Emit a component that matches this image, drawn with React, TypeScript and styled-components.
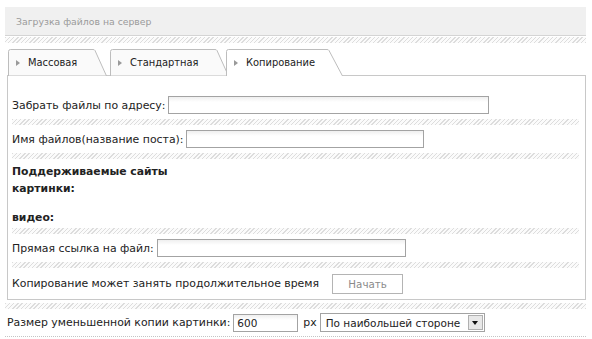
import { FC } from 'react';
import styled, { createGlobalStyle } from 'styled-components';

const GlobalStyle = createGlobalStyle`
  body {
    margin: 0;
    background: #fff;
    font-family: 'DejaVu Sans', Verdana, sans-serif;
    font-size: 10.9px;
    color: #222;
  }
`;

const hatch = 'repeating-linear-gradient(135deg, #dddddd 0 1px, #fbfbfb 1px 3px)';

const SPage = styled.div`
  padding: 7px 6px 0 5px;
  width: 581px;
`;

const SHeader = styled.div`
  height: 28px;
  display: flex;
  align-items: center;
  padding-left: 11px;
  background: #f0f0f0;
  border-bottom: 1px solid #d4d4d4;
  color: #9a9a9a;
  font-size: 9.3px;
`;

const SHatch = styled.div<{ $top?: number }>`
  height: 6px;
  margin-top: ${({ $top }) => $top ?? 0}px;
  background: ${hatch};
`;

const STabs = styled.div`
  display: flex;
  margin-top: 6px;
  margin-bottom: -1px;
  padding-left: 3px;
  height: 27px;
`;

const STab = styled.div<{ $width: number; $offset: number; $active?: boolean }>`
  position: relative;
  z-index: ${({ $active }) => ($active ? 2 : 1)};
  width: ${({ $width }) => $width}px;
  height: 27px;
  margin-left: ${({ $offset }) => $offset}px;
  display: flex;
  align-items: center;
  padding-left: 8px;
  box-sizing: border-box;
  font-size: 9.9px;
  color: #222;
`;

const STabShape = styled.svg`
  position: absolute;
  left: 0;
  top: 0;
`;

const STabArrow = styled.span`
  position: relative;
  width: 0;
  height: 0;
  border-left: 4px solid #9a9a9a;
  border-top: 3.5px solid transparent;
  border-bottom: 3.5px solid transparent;
  margin-right: 8px;
`;

const STabLabel = styled.span`
  position: relative;
`;

const SPanel = styled.div`
  margin-left: 2px;
  border: 1px solid #c8c8c8;
  padding: 15px 6px 0 4px;
`;

const SRow = styled.div<{ $height?: number }>`
  display: flex;
  align-items: center;
  height: ${({ $height }) => $height ?? 28}px;
`;

const SInput = styled.div<{ $width: number }>`
  width: ${({ $width }) => $width}px;
  height: 18px;
  box-sizing: border-box;
  margin-left: 3px;
  border: 1px solid #a3a3a3;
  background: linear-gradient(#efefef, #fff 5px);
  display: flex;
  align-items: center;
  padding-left: 3px;
  font-size: 10.5px;
`;

const SInfo = styled.div`
  padding: 4px 0 2px;
  font-weight: bold;
  font-size: 10.8px;
`;

const SInfoLine = styled.div<{ $gap?: number }>`
  height: 17px;
  line-height: 17px;
  margin-top: ${({ $gap }) => $gap ?? 0}px;
`;

const SButton = styled.div`
  width: 71px;
  height: 20px;
  box-sizing: border-box;
  margin-left: 13px;
  border: 1px solid #b4b4b4;
  background: #fff;
  color: #8a8a8a;
  font-size: 10.3px;
  display: flex;
  align-items: center;
  justify-content: center;
`;

const SSizeRow = styled.div`
  display: flex;
  align-items: center;
  height: 27px;
  padding-left: 2px;
  border-bottom: 1px dotted #c4c4c4;
`;

const SUnit = styled.span`
  margin: 0 3px 0 5px;
`;

const SSelect = styled.div`
  width: 165px;
  height: 19px;
  box-sizing: border-box;
  border: 1px solid #a3a3a3;
  display: flex;
  align-items: center;
  justify-content: space-between;
  padding: 0 1px 0 5px;
  font-size: 10.5px;
`;

const SSelectArrow = styled.span`
  width: 15px;
  height: 15px;
  box-sizing: border-box;
  border: 1px solid #b0b0b0;
  background: #e8e8e8;
  display: flex;
  align-items: center;
  justify-content: center;

  &::after {
    content: '';
    border-top: 4px solid #111;
    border-left: 3.5px solid transparent;
    border-right: 3.5px solid transparent;
  }
`;

interface TabInfo {
  title: string;
  width: number;
  offset: number;
  slant: number;
  active?: boolean;
}

const tabs: TabInfo[] = [
  { title: 'Массовая', width: 99, offset: 0, slant: 11 },
  { title: 'Стандартная', width: 119, offset: 3, slant: 11 },
  { title: 'Копирование', width: 117, offset: -3, slant: 13, active: true },
];

const Tab: FC<TabInfo> = ({ title, width, offset, slant, active }) => {
  const top = width - slant - 3;
  const outline = `M0.5 27 V2.5 Q0.5 0.5 2.5 0.5 H${top} Q${top + 1.5} 0.5 ${top + 2} 1.5 L${width - 0.5} 27`;
  return (
    <STab $width={width} $offset={offset} $active={active}>
      <STabShape width={width} height={27}>
        <path d={`${outline} Z`} fill={active ? '#fff' : '#fafafa'} />
        <path d={active ? outline : `${outline} Z`} fill="none" stroke="#bdbdbd" />
      </STabShape>
      <STabArrow />
      <STabLabel>{title}</STabLabel>
    </STab>
  );
};

export default function App() {
  return (
    <SPage>
      <GlobalStyle />
      <SHeader>Загрузка файлов на сервер</SHeader>
      <SHatch $top={1} />
      <STabs>
        {tabs.map((tab) => (
          <Tab key={tab.title} {...tab} />
        ))}
      </STabs>
      <SPanel>
        <SRow>
          Забрать файлы по адресу:
          <SInput $width={321} />
        </SRow>
        <SHatch />
        <SRow>
          Имя файлов(название поста):
          <SInput $width={238} />
        </SRow>
        <SHatch />
        <SInfo>
          <SInfoLine>Поддерживаемые сайты</SInfoLine>
          <SInfoLine>картинки:</SInfoLine>
          <SInfoLine $gap={12}>видео:</SInfoLine>
        </SInfo>
        <SHatch />
        <SRow>
          Прямая ссылка на файл:
          <SInput $width={249} />
        </SRow>
        <SHatch />
        <SRow $height={31}>
          Копирование может занять продолжительное время
          <SButton>Начать</SButton>
        </SRow>
      </SPanel>
      <SHatch $top={3} />
      <SSizeRow>
        Размер уменьшенной копии картинки:
        <SInput $width={65}>600</SInput>
        <SUnit>px</SUnit>
        <SSelect>
          По наибольшей стороне
          <SSelectArrow />
        </SSelect>
      </SSizeRow>
    </SPage>
  );
}
